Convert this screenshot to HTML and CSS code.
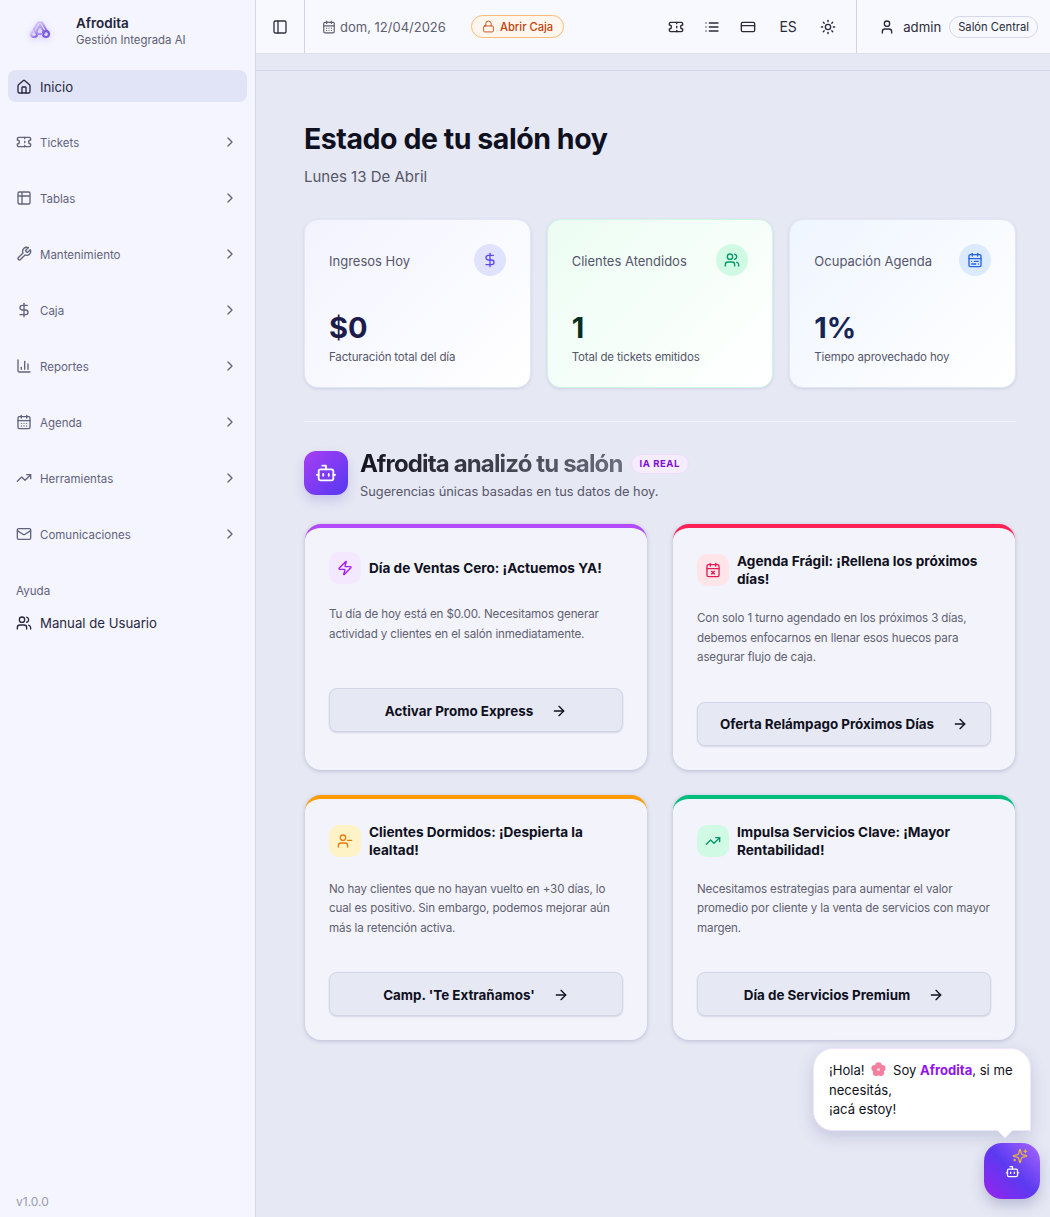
FILE: index.html
```html
<!DOCTYPE html>
<html lang="es">
<head>
    <meta charset="UTF-8">
    <meta name="viewport" content="width=device-width, initial-scale=1.0">
    <title>Afrodita</title>
    <link rel="stylesheet" href="styles.css">
</head>
<body>
    <!-- icon sprite -->
    <svg class="sprite" aria-hidden="true">
        <symbol id="i-home" viewBox="0 0 24 24"><path d="M15 21v-8a1 1 0 0 0-1-1h-4a1 1 0 0 0-1 1v8"/><path d="M3 10a2 2 0 0 1 .709-1.528l7-5.999a2 2 0 0 1 2.582 0l7 5.999A2 2 0 0 1 21 10v9a2 2 0 0 1-2 2H5a2 2 0 0 1-2-2z"/></symbol>
        <symbol id="i-ticket" viewBox="0 0 24 24"><path d="M2 9a3 3 0 0 1 0 6v2a2 2 0 0 0 2 2h16a2 2 0 0 0 2-2v-2a3 3 0 0 1 0-6V7a2 2 0 0 0-2-2H4a2 2 0 0 0-2 2Z"/><path d="M13 5v2"/><path d="M13 17v2"/><path d="M13 11v2"/></symbol>
        <symbol id="i-table" viewBox="0 0 24 24"><path d="M9 3H5a2 2 0 0 0-2 2v4m6-6h10a2 2 0 0 1 2 2v4M9 3v18m0 0h10a2 2 0 0 0 2-2V9M9 21H5a2 2 0 0 1-2-2V9m0 0h18"/></symbol>
        <symbol id="i-wrench" viewBox="0 0 24 24"><path d="M14.7 6.3a1 1 0 0 0 0 1.4l1.6 1.6a1 1 0 0 0 1.4 0l3.77-3.77a6 6 0 0 1-7.94 7.94l-6.91 6.91a2.12 2.12 0 0 1-3-3l6.91-6.91a6 6 0 0 1 7.94-7.94l-3.76 3.76z"/></symbol>
        <symbol id="i-dollar" viewBox="0 0 24 24"><path d="M12 2v20"/><path d="M17 5H9.5a3.5 3.5 0 0 0 0 7h5a3.5 3.5 0 0 1 0 7H6"/></symbol>
        <symbol id="i-chart" viewBox="0 0 24 24"><path d="M3 3v16a2 2 0 0 0 2 2h16"/><path d="M18 17V9"/><path d="M13 17V5"/><path d="M8 17v-3"/></symbol>
        <symbol id="i-calendar" viewBox="0 0 24 24"><path d="M8 2v4"/><path d="M16 2v4"/><rect width="18" height="18" x="3" y="4" rx="2"/><path d="M3 10h18"/><path d="M8 14h.01"/><path d="M12 14h.01"/><path d="M16 14h.01"/><path d="M8 18h.01"/><path d="M12 18h.01"/><path d="M16 18h.01"/></symbol>
        <symbol id="i-calendar-range" viewBox="0 0 24 24"><rect width="18" height="18" x="3" y="4" rx="2"/><path d="M16 2v4"/><path d="M3 10h18"/><path d="M8 2v4"/><path d="M17 14h-6"/><path d="M13 18H7"/><path d="M7 14h.01"/><path d="M17 18h.01"/></symbol>
        <symbol id="i-calendar-x" viewBox="0 0 24 24"><path d="M8 2v4"/><path d="M16 2v4"/><rect width="18" height="18" x="3" y="4" rx="2"/><path d="M3 10h18"/><path d="m14 14-4 4"/><path d="m10 14 4 4"/></symbol>
        <symbol id="i-trend" viewBox="0 0 24 24"><polyline points="22 7 13.5 15.5 8.5 10.5 2 17"/><polyline points="16 7 22 7 22 13"/></symbol>
        <symbol id="i-mail" viewBox="0 0 24 24"><rect width="20" height="16" x="2" y="4" rx="2"/><path d="m22 7-8.97 5.7a1.94 1.94 0 0 1-2.06 0L2 7"/></symbol>
        <symbol id="i-users" viewBox="0 0 24 24"><path d="M16 21v-2a4 4 0 0 0-4-4H6a4 4 0 0 0-4 4v2"/><circle cx="9" cy="7" r="4"/><path d="M22 21v-2a4 4 0 0 0-3-3.87"/><path d="M16 3.13a4 4 0 0 1 0 7.75"/></symbol>
        <symbol id="i-chevron" viewBox="0 0 24 24"><path d="m9 18 6-6-6-6"/></symbol>
        <symbol id="i-panel" viewBox="0 0 24 24"><rect width="18" height="18" x="3" y="3" rx="2"/><path d="M9 3v18"/></symbol>
        <symbol id="i-lock" viewBox="0 0 24 24"><rect width="18" height="11" x="3" y="11" rx="2" ry="2"/><path d="M7 11V7a5 5 0 0 1 10 0v4"/></symbol>
        <symbol id="i-list" viewBox="0 0 24 24"><path d="M3 12h.01"/><path d="M3 18h.01"/><path d="M3 6h.01"/><path d="M8 12h13"/><path d="M8 18h13"/><path d="M8 6h13"/></symbol>
        <symbol id="i-card" viewBox="0 0 24 24"><rect width="20" height="14" x="2" y="5" rx="2"/><path d="M2 10h20"/></symbol>
        <symbol id="i-sun" viewBox="0 0 24 24"><circle cx="12" cy="12" r="4"/><path d="M12 2v2"/><path d="M12 20v2"/><path d="m4.93 4.93 1.41 1.41"/><path d="m17.66 17.66 1.41 1.41"/><path d="M2 12h2"/><path d="M20 12h2"/><path d="m6.34 17.66-1.41 1.41"/><path d="m19.07 4.93-1.41 1.41"/></symbol>
        <symbol id="i-user" viewBox="0 0 24 24"><path d="M19 21v-2a4 4 0 0 0-4-4H9a4 4 0 0 0-4 4v2"/><circle cx="12" cy="7" r="4"/></symbol>
        <symbol id="i-user-minus" viewBox="0 0 24 24"><path d="M16 21v-2a4 4 0 0 0-4-4H6a4 4 0 0 0-4 4v2"/><circle cx="9" cy="7" r="4"/><path d="M22 11h-6"/></symbol>
        <symbol id="i-bot" viewBox="0 0 24 24"><path d="M12 8V4H8"/><rect width="16" height="12" x="4" y="8" rx="2"/><path d="M2 14h2"/><path d="M20 14h2"/><path d="M15 13v2"/><path d="M9 13v2"/></symbol>
        <symbol id="i-zap" viewBox="0 0 24 24"><path d="M4 14a1 1 0 0 1-.78-1.63l9.9-10.2a.5.5 0 0 1 .86.46l-1.92 6.02A1 1 0 0 0 13 10h7a1 1 0 0 1 .78 1.63l-9.9 10.2a.5.5 0 0 1-.86-.46l1.92-6.02A1 1 0 0 0 11 14z"/></symbol>
        <symbol id="i-arrow" viewBox="0 0 24 24"><path d="M5 12h14"/><path d="m12 5 7 7-7 7"/></symbol>
        <symbol id="i-sparkles" viewBox="0 0 24 24"><path d="M9.937 15.5A2 2 0 0 0 8.5 14.063l-6.135-1.582a.5.5 0 0 1 0-.962L8.5 9.936A2 2 0 0 0 9.937 8.5l1.582-6.135a.5.5 0 0 1 .963 0L14.063 8.5A2 2 0 0 0 15.5 9.937l6.135 1.581a.5.5 0 0 1 0 .964L15.5 14.063a2 2 0 0 0-1.437 1.437l-1.582 6.135a.5.5 0 0 1-.963 0z"/><path d="M20 3v4"/><path d="M22 5h-4"/><path d="M4 17v2"/><path d="M5 18H3"/></symbol>
    </svg>

    <div class="app">
        <aside class="sidebar">
            <div class="brand">
                <svg class="brand-logo" viewBox="0 0 24 20">
                    <defs>
                        <linearGradient id="logoGrad" x1="0" y1="0" x2="1" y2="1">
                            <stop offset="0" stop-color="#ecd8fc"/>
                            <stop offset="1" stop-color="#7c5ce0"/>
                        </linearGradient>
                    </defs>
                    <path d="M10 2.5 L4.5 12 M14 2.5 L19.5 12 M10 2.5 L14 2.5 M12 5 L7.5 13 M12 5 L16.5 13" fill="none" stroke="url(#logoGrad)" stroke-width="2" stroke-linecap="round"/>
                    <circle cx="6" cy="14" r="3" fill="none" stroke="url(#logoGrad)" stroke-width="2.2"/>
                    <circle cx="18" cy="14" r="3" fill="none" stroke="#7c5ce0" stroke-width="2.2"/>
                    <path d="M9 14h6" stroke="#a98cf0" stroke-width="2"/>
                </svg>
                <div>
                    <div class="brand-name">Afrodita</div>
                    <div class="brand-sub">Gestión Integrada AI</div>
                </div>
            </div>

            <nav class="nav">
                <a class="nav-home"><svg class="ico"><use href="#i-home"/></svg>Inicio</a>
                <a class="nav-item"><svg class="ico"><use href="#i-ticket"/></svg><span>Tickets</span><svg class="ico chev"><use href="#i-chevron"/></svg></a>
                <a class="nav-item"><svg class="ico"><use href="#i-table"/></svg><span>Tablas</span><svg class="ico chev"><use href="#i-chevron"/></svg></a>
                <a class="nav-item"><svg class="ico"><use href="#i-wrench"/></svg><span>Mantenimiento</span><svg class="ico chev"><use href="#i-chevron"/></svg></a>
                <a class="nav-item"><svg class="ico"><use href="#i-dollar"/></svg><span>Caja</span><svg class="ico chev"><use href="#i-chevron"/></svg></a>
                <a class="nav-item"><svg class="ico"><use href="#i-chart"/></svg><span>Reportes</span><svg class="ico chev"><use href="#i-chevron"/></svg></a>
                <a class="nav-item"><svg class="ico"><use href="#i-calendar"/></svg><span>Agenda</span><svg class="ico chev"><use href="#i-chevron"/></svg></a>
                <a class="nav-item"><svg class="ico"><use href="#i-trend"/></svg><span>Herramientas</span><svg class="ico chev"><use href="#i-chevron"/></svg></a>
                <a class="nav-item"><svg class="ico"><use href="#i-mail"/></svg><span>Comunicaciones</span><svg class="ico chev"><use href="#i-chevron"/></svg></a>
            </nav>

            <div class="nav-label">Ayuda</div>
            <a class="nav-manual"><svg class="ico"><use href="#i-users"/></svg>Manual de Usuario</a>

            <div class="version">v1.0.0</div>
        </aside>

        <div class="content">
            <header class="topbar">
                <div class="topbar-toggle"><svg class="ico"><use href="#i-panel"/></svg></div>
                <div class="topbar-date"><svg class="ico"><use href="#i-calendar"/></svg>dom, 12/04/2026</div>
                <div class="cash-pill"><svg class="ico"><use href="#i-lock"/></svg>Abrir Caja</div>
                <div class="topbar-tools">
                    <svg class="ico"><use href="#i-ticket"/></svg>
                    <svg class="ico"><use href="#i-list"/></svg>
                    <svg class="ico"><use href="#i-card"/></svg>
                    <span class="lang">ES</span>
                    <svg class="ico"><use href="#i-sun"/></svg>
                </div>
                <div class="topbar-user">
                    <svg class="ico"><use href="#i-user"/></svg>
                    <span class="user-name">admin</span>
                    <span class="branch-pill">Salón Central</span>
                </div>
            </header>
            <div class="subbar"></div>

            <main class="main">
                <h1>Estado de tu salón hoy</h1>
                <p class="date-line">Lunes 13 De Abril</p>

                <section class="stats">
                    <div class="stat stat-indigo">
                        <div class="stat-head">
                            <span>Ingresos Hoy</span>
                            <div class="stat-icon"><svg class="ico"><use href="#i-dollar"/></svg></div>
                        </div>
                        <div class="stat-value">$0</div>
                        <div class="stat-note">Facturación total del día</div>
                    </div>
                    <div class="stat stat-green">
                        <div class="stat-head">
                            <span>Clientes Atendidos</span>
                            <div class="stat-icon"><svg class="ico"><use href="#i-users"/></svg></div>
                        </div>
                        <div class="stat-value">1</div>
                        <div class="stat-note">Total de tickets emitidos</div>
                    </div>
                    <div class="stat stat-blue">
                        <div class="stat-head">
                            <span>Ocupación Agenda</span>
                            <div class="stat-icon"><svg class="ico"><use href="#i-calendar-range"/></svg></div>
                        </div>
                        <div class="stat-value">1%</div>
                        <div class="stat-note">Tiempo aprovechado hoy</div>
                    </div>
                </section>

                <section class="insights">
                    <div class="insights-head">
                        <div class="bot-badge"><svg class="ico"><use href="#i-bot"/></svg></div>
                        <div>
                            <div class="insights-title"><h2>Afrodita analizó tu salón</h2><span class="ia-tag">IA REAL</span></div>
                            <p>Sugerencias únicas basadas en tus datos de hoy.</p>
                        </div>
                    </div>

                    <div class="tips">
                        <article class="tip tip-purple">
                            <div class="tip-head">
                                <div class="tip-icon"><svg class="ico"><use href="#i-zap"/></svg></div>
                                <h3>Día de Ventas Cero: ¡Actuemos YA!</h3>
                            </div>
                            <p>Tu día de hoy está en $0.00. Necesitamos generar actividad y clientes en el salón inmediatamente.</p>
                            <button>Activar Promo Express<svg class="ico"><use href="#i-arrow"/></svg></button>
                        </article>
                        <article class="tip tip-red">
                            <div class="tip-head">
                                <div class="tip-icon"><svg class="ico"><use href="#i-calendar-x"/></svg></div>
                                <h3>Agenda Frágil: ¡Rellena los próximos días!</h3>
                            </div>
                            <p>Con solo 1 turno agendado en los próximos 3 días, debemos enfocarnos en llenar esos huecos para asegurar flujo de caja.</p>
                            <button>Oferta Relámpago Próximos Días<svg class="ico"><use href="#i-arrow"/></svg></button>
                        </article>
                        <article class="tip tip-orange">
                            <div class="tip-head">
                                <div class="tip-icon"><svg class="ico"><use href="#i-user-minus"/></svg></div>
                                <h3>Clientes Dormidos: ¡Despierta la lealtad!</h3>
                            </div>
                            <p>No hay clientes que no hayan vuelto en +30 días, lo cual es positivo. Sin embargo, podemos mejorar aún más la retención activa.</p>
                            <button>Camp. 'Te Extrañamos'<svg class="ico"><use href="#i-arrow"/></svg></button>
                        </article>
                        <article class="tip tip-emerald">
                            <div class="tip-head">
                                <div class="tip-icon"><svg class="ico"><use href="#i-trend"/></svg></div>
                                <h3>Impulsa Servicios Clave: ¡Mayor Rentabilidad!</h3>
                            </div>
                            <p>Necesitamos estrategias para aumentar el valor promedio por cliente y la venta de servicios con mayor margen.</p>
                            <button>Día de Servicios Premium<svg class="ico"><use href="#i-arrow"/></svg></button>
                        </article>
                    </div>
                </section>
            </main>
        </div>
    </div>

    <!-- floating assistant -->
    <div class="chat-bubble">
        ¡Hola! <svg class="flower" viewBox="0 0 20 20"><g fill="#f47f9f"><circle cx="10" cy="4.8" r="4.4"/><circle cx="15" cy="8.4" r="4.4"/><circle cx="13.1" cy="14.3" r="4.4"/><circle cx="6.9" cy="14.3" r="4.4"/><circle cx="5" cy="8.4" r="4.4"/></g><circle cx="10" cy="10" r="2" fill="#fbd3de"/></svg> Soy <b>Afrodita</b>, si me<br>necesitás,<br>¡acá estoy!
    </div>
    <div class="chat-button">
        <svg class="ico spark"><use href="#i-sparkles"/></svg>
        <svg class="ico"><use href="#i-bot"/></svg>
    </div>
</body>
</html>
```

FILE: styles.css
```css
* {
    box-sizing: border-box;
}
body {
    margin: 0;
    height: 100vh;
    overflow: hidden;
    font-family: Inter, "Noto Sans", sans-serif;
    color: #0f1020;
    background: #e6e8f4;
}
.sprite {
    display: none;
}
.ico {
    width: 16px;
    height: 16px;
    flex: none;
    fill: none;
    stroke: currentColor;
    stroke-width: 2;
    stroke-linecap: round;
    stroke-linejoin: round;
}
.app {
    display: flex;
    height: 100vh;
}

/* sidebar */
.sidebar {
    width: 256px;
    flex: none;
    display: flex;
    flex-direction: column;
    padding: 0 8px;
    background: #f4f5ff;
    border-right: 1px solid #d5d8ea;
}
.brand {
    height: 70px;
    flex: none;
    display: flex;
    align-items: flex-start;
    gap: 24px;
    padding: 15px 0 0 20px;
}
.brand-logo {
    width: 24px;
    height: 20px;
    margin-top: 5px;
    filter: drop-shadow(0 2px 3px rgba(124, 92, 224, .3));
}
.brand-name {
    font-size: 13.5px;
    font-weight: 600;
    line-height: 17px;
    color: #24243a;
}
.brand-sub {
    font-size: 11.4px;
    line-height: 16px;
    color: #5f6070;
}
.nav {
    display: flex;
    flex-direction: column;
}
.nav-home {
    height: 32px;
    display: flex;
    align-items: center;
    gap: 8px;
    padding: 1px 0 0 8px;
    margin-bottom: 12px;
    border-radius: 8px;
    background: #e1e3f6;
    font-size: 13.2px;
    color: #272840;
}
.nav-item {
    height: 56px;
    display: flex;
    align-items: center;
    gap: 8px;
    padding: 0 9px 0 8px;
    font-size: 11.5px;
    color: #62637a;
}
.nav-item span {
    flex: 1;
    padding-top: 2px;
}
.nav-label {
    margin-top: 21px;
    padding-left: 8px;
    font-size: 11.6px;
    line-height: 16px;
    color: #62637a;
}
.nav-manual {
    display: flex;
    align-items: center;
    gap: 8px;
    height: 32px;
    margin-top: 8px;
    padding-left: 8px;
    font-size: 13.2px;
    color: #272840;
}
.version {
    margin-top: auto;
    padding: 0 0 8px 8px;
    font-size: 12px;
    color: #9a9bab;
}

/* top bar */
.content {
    flex: 1;
    min-width: 0;
    display: flex;
    flex-direction: column;
}
.topbar {
    height: 54px;
    flex: none;
    display: flex;
    align-items: center;
    background: #f8f9fe;
    border-bottom: 1px solid #dee0ef;
    font-size: 13.2px;
    color: #5d5e70;
}
.topbar-toggle {
    width: 49px;
    height: 53px;
    display: flex;
    align-items: center;
    justify-content: center;
    border-right: 1px solid #cfd2e8;
    color: #30313f;
}
.topbar-date {
    display: flex;
    align-items: center;
    gap: 4px;
    margin-left: 17px;
    width: 149px;
    font-size: 13px;
}
.topbar-date .ico {
    width: 14px;
    height: 14px;
}
.cash-pill {
    display: flex;
    align-items: center;
    gap: 5px;
    height: 23px;
    padding: 0 10px;
    border: 1px solid #fdba74;
    border-radius: 12px;
    background: #fff7ed;
    color: #c2410c;
    font-size: 11.2px;
    font-weight: 500;
}
.cash-pill .ico {
    width: 13px;
    height: 13px;
    stroke-width: 1.6;
}
.topbar-tools {
    display: flex;
    align-items: center;
    margin-left: auto;
    height: 53px;
    gap: 20px;
    padding-right: 20px;
    border-right: 1px solid #cfd2e8;
    color: #2a2b38;
}
.lang {
    width: 24px;
    text-align: center;
    font-size: 14px;
}
.topbar-user {
    display: flex;
    align-items: center;
    padding: 0 12px 0 22px;
    color: #2a2b38;
}
.user-name {
    margin: 0 8px;
}
.branch-pill {
    height: 22px;
    padding: 0 8px;
    line-height: 21px;
    border: 1px solid #d5d8ea;
    border-radius: 11px;
    font-size: 11.2px;
}
.subbar {
    height: 17px;
    flex: none;
    border-bottom: 1px solid #d3d6ea;
}

/* main */
.main {
    padding: 49px 34px 0 48px;
}
h1 {
    margin: 0;
    font-size: 28.5px;
    line-height: 38px;
    font-weight: 700;
    letter-spacing: -.45px;
    color: #0f1020;
}
.date-line {
    margin: 8px 0 0;
    font-size: 15px;
    line-height: 22px;
    color: #555668;
}
.stats {
    display: grid;
    grid-template-columns: repeat(3, 1fr);
    gap: 16px;
    margin-top: 31px;
    padding-bottom: 33px;
    border-bottom: 1px solid #f1f2fa;
}
.stat {
    height: 169px;
    padding: 24px 24px 0;
    border: 1px solid #e3e6f5;
    border-radius: 14px;
    box-shadow: 0 1px 3px rgba(90, 95, 150, .18);
}
.stat-indigo {
    background: linear-gradient(135deg, #f2f3ff, #ffffff);
}
.stat-green {
    background: linear-gradient(135deg, #ecfdf3, #ffffff);
    border-color: #d1f5e2;
}
.stat-blue {
    background: linear-gradient(135deg, #eff5ff, #ffffff);
}
.stat-head {
    display: flex;
    justify-content: space-between;
    align-items: center;
    font-size: 13px;
    color: #55566a;
}
.stat-head span {
    padding-top: 2px;
}
.stat-icon {
    width: 32px;
    height: 32px;
    display: flex;
    align-items: center;
    justify-content: center;
    border-radius: 50%;
}
.stat-indigo .stat-icon {
    background: #e0e3ff;
    color: #5b49f0;
}
.stat-green .stat-icon {
    background: #d1fae5;
    color: #059669;
}
.stat-blue .stat-icon {
    background: #dbeafe;
    color: #2563eb;
}
.stat-value {
    margin-top: 34px;
    font-size: 29px;
    line-height: 36px;
    font-weight: 700;
    color: #1c1b4b;
}
.stat-green .stat-value {
    color: #062e25;
}
.stat-blue .stat-value {
    color: #172554;
}
.stat-note {
    margin-top: 3px;
    font-size: 11.5px;
    letter-spacing: -.15px;
    line-height: 16px;
    color: #55566a;
}

/* insights */
.insights {
    margin-top: 29px;
}
.insights-head {
    display: flex;
    gap: 12px;
}
.bot-badge {
    width: 44px;
    height: 44px;
    display: flex;
    align-items: center;
    justify-content: center;
    border-radius: 12px;
    background: linear-gradient(135deg, #a83ff5, #5438f0);
    box-shadow: 0 6px 12px rgba(90, 70, 200, .2);
    color: #fff;
}
.bot-badge .ico {
    width: 22px;
    height: 22px;
}
.insights-title {
    display: flex;
    align-items: center;
    gap: 8px;
    height: 26px;
}
h2 {
    margin: 0;
    font-size: 24px;
    line-height: 26px;
    font-weight: 700;
    letter-spacing: -.85px;
    background: linear-gradient(90deg, #14141f, #6b6c7c);
    background-clip: text;
    -webkit-background-clip: text;
    color: transparent;
}
.ia-tag {
    height: 20px;
    padding: 0 8px;
    line-height: 18px;
    border: 1px solid #efdcfe;
    border-radius: 10px;
    background: #f5ecff;
    color: #7e10cc;
    font-size: 9.6px;
    font-weight: 700;
    letter-spacing: .5px;
}
.insights-head p {
    margin: 6px 0 0;
    font-size: 12.8px;
    line-height: 18px;
    color: #55566a;
}
.tips {
    display: grid;
    grid-template-columns: repeat(2, 1fr);
    column-gap: 26px;
    row-gap: 25px;
    margin: 23px 1px 0;
}
.tip {
    padding: 24px 24px 24px;
    border-top: 4px solid #000;
    border-radius: 16px;
    background: #f3f4fb;
    box-shadow: 0 1px 4px rgba(80, 85, 140, .3);
}
.tip-purple {
    border-top-color: #b44bfa;
}
.tip-red {
    border-top-color: #ff2155;
}
.tip-orange {
    border-top-color: #ff9c05;
}
.tip-emerald {
    border-top-color: #00bd7e;
}
.tip-head {
    display: flex;
    align-items: center;
    gap: 8px;
}
.tip-icon {
    width: 32px;
    height: 32px;
    flex: none;
    display: flex;
    align-items: center;
    justify-content: center;
    border-radius: 10px;
}
.tip-purple .tip-icon {
    background: #f3e8ff;
    color: #a21df0;
}
.tip-red .tip-icon {
    background: #ffe4e8;
    color: #e11d55;
}
.tip-orange .tip-icon {
    background: #fef3c7;
    color: #ea7a0c;
}
.tip-emerald .tip-icon {
    background: #d1fae5;
    color: #059669;
}
h3 {
    margin: 0;
    font-size: 13.6px;
    line-height: 18px;
    font-weight: 700;
    color: #0f1020;
}
.tip p {
    margin: 21px 0 0;
    font-size: 11.6px;
    letter-spacing: -.13px;
    line-height: 19.5px;
    color: #5f6070;
}
.tip button {
    width: 100%;
    height: 44px;
    margin-top: 34px;
    padding-top: 2px;
    display: flex;
    align-items: center;
    justify-content: center;
    gap: 18px;
    border: 1px solid #d2d5e8;
    border-radius: 8px;
    background: #e6e8f4;
    box-shadow: 0 1px 2px rgba(80, 85, 140, .2);
    font-family: inherit;
    font-size: 13.4px;
    font-weight: 700;
    color: #0f1020;
}
.tip-purple button {
    margin-top: 44px;
}

/* floating assistant */
.chat-bubble {
    position: absolute;
    left: 813px;
    top: 1048px;
    width: 218px;
    height: 83px;
    padding: 12px 15px;
    border: 1px solid #f0e6fc;
    border-radius: 20px 20px 0 20px;
    background: #fff;
    box-shadow: 0 6px 16px rgba(80, 85, 140, .22);
    font-size: 13.1px;
    line-height: 19.7px;
    color: #0f1020;
}
.chat-bubble::after {
    content: "";
    position: absolute;
    right: 17px;
    bottom: -8px;
    width: 0;
    height: 0;
    border-left: 8px solid transparent;
    border-right: 8px solid transparent;
    border-top: 8px solid #fff;
}
.chat-bubble b {
    color: #9313ee;
}
.flower {
    width: 15px;
    height: 15px;
    margin: 0 3px;
    vertical-align: -2px;
}
.chat-button {
    position: absolute;
    left: 984px;
    top: 1143px;
    width: 56px;
    height: 56px;
    display: flex;
    align-items: center;
    justify-content: center;
    border-radius: 18px;
    background: linear-gradient(45deg, #9a22ee 0%, #5b3af0 50%, #a866ff 100%);
    box-shadow: 0 6px 14px rgba(80, 85, 140, .3);
    color: #fff;
}
.chat-button > .ico {
    width: 15px;
    height: 15px;
}
.chat-button .spark {
    position: absolute;
    left: 28px;
    top: 5px;
    width: 16px;
    height: 16px;
    color: #e2b53c;
}
```
